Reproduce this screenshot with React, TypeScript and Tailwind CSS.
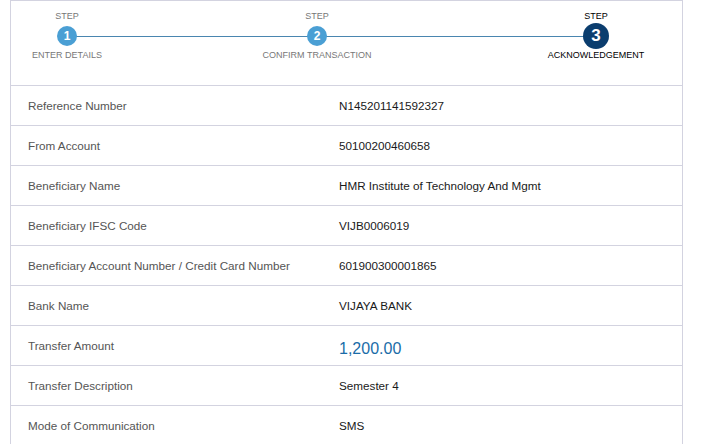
const rows: { label: string; value: string; amount?: boolean }[] = [
  { label: "Reference Number", value: "N145201141592327" },
  { label: "From Account", value: "50100200460658" },
  { label: "Beneficiary Name", value: "HMR Institute of Technology And Mgmt" },
  { label: "Beneficiary IFSC Code", value: "VIJB0006019" },
  { label: "Beneficiary Account Number / Credit Card Number", value: "601900300001865" },
  { label: "Bank Name", value: "VIJAYA BANK" },
  { label: "Transfer Amount", value: "1,200.00", amount: true },
  { label: "Transfer Description", value: "Semester 4" },
  { label: "Mode of Communication", value: "SMS" },
]

function Step({ n, title, active, width }: { n: number; title: string; active?: boolean; width: string }) {
  return (
    <div className={`flex flex-col items-center ${width}`}>
      <div className={`text-[9px] leading-[11px] ${active ? "text-black" : "text-[#777]"}`}>STEP</div>
      <div className="h-[28px] flex items-center justify-center">
        {active ? (
          <div className="w-[26px] h-[26px] rounded-full bg-[#0b3d6e] text-white text-[17px] font-bold flex items-center justify-center">
            {n}
          </div>
        ) : (
          <div className="w-[20px] h-[20px] rounded-full bg-[#4a9fd4] text-white text-[12px] font-bold flex items-center justify-center">
            {n}
          </div>
        )}
      </div>
      <div className={`text-[9px] leading-[11px] whitespace-nowrap ${active ? "text-black" : "text-[#777]"}`}>{title}</div>
    </div>
  )
}

export default function App() {
  return (
    <div className="w-[719px] h-[444px] overflow-hidden bg-white font-['Liberation_Sans',Arial,sans-serif]">
      <div className="ml-[10px] w-[673px] border border-t border-[#d3d3e0] border-b-0">
        {/* step indicator */}
        <div className="relative h-[84px] pt-[10px] flex pl-[10px]">
          <div className="absolute left-[56px] w-[529px] top-[35px] h-px bg-[#4a86b0]" />
          <div className="relative flex">
            <Step n={1} title="ENTER DETAILS" width="w-[92px]" />
            <div className="w-[134px]" />
            <Step n={2} title="CONFIRM TRANSACTION" width="w-[140px]" />
            <div className="w-[149px]" />
            <Step n={3} title="ACKNOWLEDGEMENT" active width="w-[120px]" />
          </div>
        </div>

        {/* details */}
        {rows.map((r) => (
          <div key={r.label} className="h-[40px] border-t border-[#d3d3e0] flex items-center text-[11.7px]">
            <div className="w-[328px] pl-[17px] text-[#555]">{r.label}</div>
            {r.amount ? (
              <div className="pt-[6px] text-[16px] text-[#1a6ca8]">{r.value}</div>
            ) : (
              <div className="text-[#1a1a1a]">{r.value}</div>
            )}
          </div>
        ))}
      </div>
    </div>
  )
}
